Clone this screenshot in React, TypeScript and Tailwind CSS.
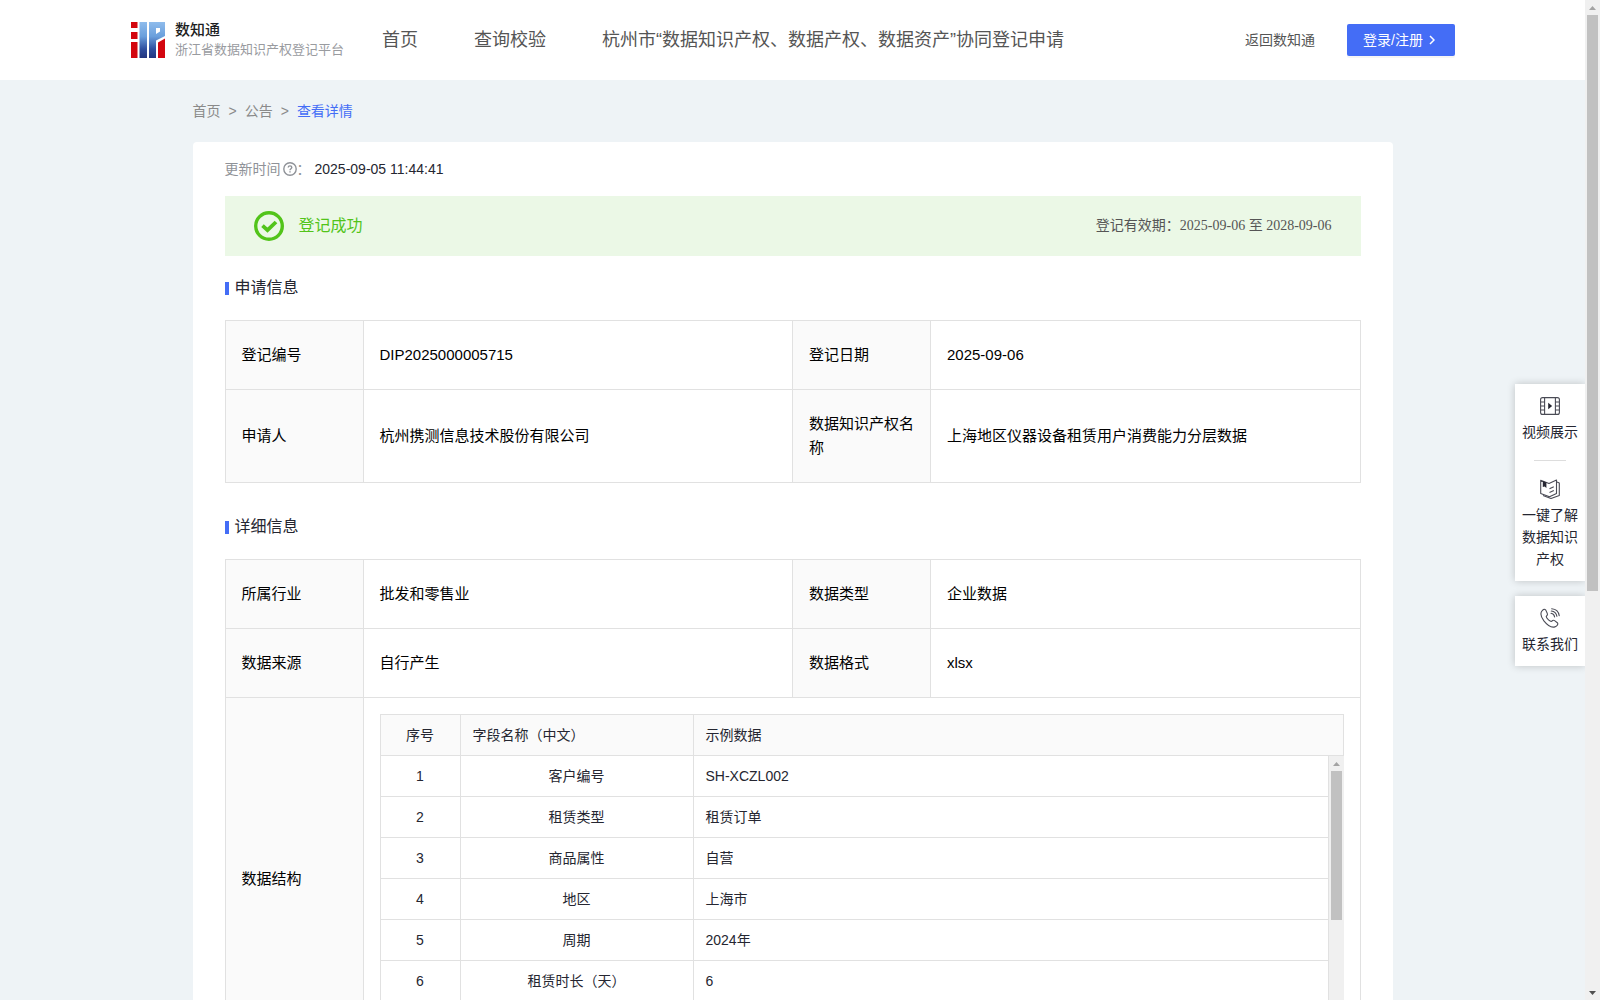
import React from "react";

const infoRows: [string, string, string, string][] = [
  ["登记编号", "DIP2025000005715", "登记日期", "2025-09-06"],
  ["申请人", "杭州携测信息技术股份有限公司", "数据知识产权名称", "上海地区仪器设备租赁用户消费能力分层数据"],
];

const detailRows: [string, string, string, string][] = [
  ["所属行业", "批发和零售业", "数据类型", "企业数据"],
  ["数据来源", "自行产生", "数据格式", "xlsx"],
];

const fields: [string, string][] = [
  ["客户编号", "SH-XCZL002"],
  ["租赁类型", "租赁订单"],
  ["商品属性", "自营"],
  ["地区", "上海市"],
  ["周期", "2024年"],
  ["租赁时长（天）", "6"],
];

function Logo() {
  return (
    <svg width="34" height="36" viewBox="0 0 34 36" aria-hidden="true">
      <defs>
        <linearGradient id="logoBlue" x1="0" y1="0" x2="0" y2="36" gradientUnits="userSpaceOnUse">
          <stop offset="0" stopColor="#8fbcec" />
          <stop offset="0.4" stopColor="#6a9fdc" />
          <stop offset="0.75" stopColor="#2f4f9f" />
          <stop offset="1" stopColor="#23367f" />
        </linearGradient>
      </defs>
      <g fill="#d3060f">
        <rect x="0" y="0" width="6.5" height="6" />
        <rect x="0" y="10" width="6.5" height="7" />
        <rect x="0" y="20" width="6.5" height="16" />
        <path d="M27 20.5 34 16.5V36H27Z" />
      </g>
      <g fill="url(#logoBlue)">
        <rect x="8.5" y="0" width="7.5" height="36" />
        <path fillRule="evenodd" d="M18 0H34V14L25 18.5V36H18ZM25 6V12L29 9.5V6Z" />
      </g>
    </svg>
  );
}

function HelpIcon() {
  return (
    <svg width="14" height="14" viewBox="0 0 14 14" fill="none" stroke="#8f9298" strokeWidth="1.4" aria-hidden="true">
      <circle cx="7" cy="7" r="6.2" />
      <path d="M5.2 5.6C5.2 4.5 6 3.9 7 3.9S8.8 4.5 8.8 5.5C8.8 6.6 7 6.8 7 8.2M7 9.3V10.5" />
    </svg>
  );
}

function SuccessIcon() {
  return (
    <svg width="30" height="30" viewBox="0 0 30 30" fill="none" stroke="#52c41a" aria-hidden="true">
      <circle cx="15" cy="15" r="13.3" strokeWidth="3.4" />
      <path d="M8.5 14.7 13.5 19.2 22 11" strokeWidth="3.8" />
    </svg>
  );
}

function VideoIcon() {
  return (
    <svg width="20" height="18" viewBox="0 0 20 18" fill="none" stroke="#4a4b55" strokeWidth="1.1" aria-hidden="true">
      <rect x="0.6" y="0.6" width="18.8" height="16.8" rx="2" />
      <path d="M4.6 1V17M15.4 1V17M1 5H4.6M1 9H4.6M1 13H4.6M15.4 5H19M15.4 9H19M15.4 13H19" />
      <path d="M8.2 5.8V12.2L12.2 9Z" fill="#252631" stroke="none" />
    </svg>
  );
}

function BookIcon() {
  return (
    <svg width="20" height="20" viewBox="0 0 20 20" fill="none" stroke="#4a4b55" strokeWidth="1.1" strokeLinejoin="round" aria-hidden="true">
      <path d="M0.7 1.2 9 4.5 16.5 1V14.5L9.5 17.8 0.7 14.5Z" />
      <path d="M17 3 19.3 4V16.5L11 19.5 3 16.5M9.5 9.8 13.8 7.8M9.5 13.6 13.8 11.6" />
      <path d="M2.8 2 6.4 3.5V9L4.6 7.4 2.8 8Z" fill="#252631" stroke="none" />
    </svg>
  );
}

function PhoneIcon() {
  return (
    <svg width="20" height="20" viewBox="0 0 20 20" fill="none" stroke="#4a4b55" strokeWidth="1.1" strokeLinecap="round" strokeLinejoin="round" aria-hidden="true">
      <path d="M5.8 2.1C4.7.9 3.5 1.1 2.2 2.6 0 5 .6 8.4 3.9 12.9 7.5 17.5 11.7 19.8 14.9 18.9 17.3 18.2 18.5 15.9 17.3 14.7L14.6 12.6C13.4 11.8 12.7 12.1 11.7 13.3 10.3 14 6.4 10.2 6.2 8.5 7.4 7.4 7.9 6.7 7.3 5.5Z" />
      <path d="M11 5.3C13 5.6 14.300 6.800 14.600 9M11.300 3C14.300 3.400 16.400 5.400 16.900 8.300M11.700.8C15.600 1.100 18.600 3.900 19.200 7.600" />
    </svg>
  );
}

function ArrowUp() {
  return (
    <svg width="7" height="4" viewBox="0 0 7 4" aria-hidden="true">
      <path d="M3.5 0 7 4H0Z" fill="#a3a3a3" />
    </svg>
  );
}

function ArrowDown() {
  return (
    <svg width="7" height="4" viewBox="0 0 7 4" aria-hidden="true">
      <path d="M0 0H7L3.5 4Z" fill="#505050" />
    </svg>
  );
}

function SectionTitle({ children }: { children: React.ReactNode }) {
  return (
    <h2 className="flex items-center gap-1.5 text-base leading-6 text-[#252631]">
      <span className="mt-px h-[13px] w-1 bg-[#446df6]" />
      {children}
    </h2>
  );
}

const labelCell = "border border-[#e1e1e1] bg-[#fafafa] py-[22px] pr-3 pl-4 text-left font-normal";
const valueCell = "border border-[#e1e1e1] px-4 py-[22px]";

function InfoTable({ rows, children }: { rows: [string, string, string, string][]; children?: React.ReactNode }) {
  return (
    <table className="mt-5 w-full table-fixed border-collapse text-[15px] leading-6 text-black">
      <colgroup>
        <col className="w-[138px]" />
        <col />
        <col className="w-[138px]" />
        <col />
      </colgroup>
      <tbody>
        {rows.map((r) => (
          <tr key={r[0]}>
            <th scope="row" className={labelCell}>{r[0]}</th>
            <td className={valueCell}>{r[1]}</td>
            <th scope="row" className={labelCell}>{r[2]}</th>
            <td className={valueCell}>{r[3]}</td>
          </tr>
        ))}
        {children}
      </tbody>
    </table>
  );
}

function FieldCols() {
  return (
    <colgroup>
      <col className="w-20" />
      <col className="w-[233px]" />
      <col />
    </colgroup>
  );
}

function FieldTable() {
  return (
    <div className="text-sm leading-5 text-[#252631]">
      <table className="w-full table-fixed border-collapse">
        <FieldCols />
        <thead>
          <tr className="h-[41px] bg-[#fafafa]">
            <th className="border border-[#e1e1e1] font-normal">序号</th>
            <th className="border border-[#e1e1e1] px-3 text-left font-normal">字段名称（中文）</th>
            <th className="border border-[#e1e1e1] px-3 text-left font-normal">示例数据</th>
          </tr>
        </thead>
      </table>
      <div className="flex h-[288px] overflow-hidden">
        <div className="min-w-0 flex-1">
          <table className="w-full table-fixed border-collapse">
            <FieldCols />
            <tbody>
              {fields.map(([name, sample], i) => (
                <tr key={name} className="h-[41px] first:h-10">
                  <td className="border border-t-0 border-[#e1e1e1] text-center">{i + 1}</td>
                  <td className="border border-t-0 border-[#e1e1e1] px-3 text-center">{name}</td>
                  <td className="border border-t-0 border-[#e1e1e1] px-3">{sample}</td>
                </tr>
              ))}
            </tbody>
          </table>
        </div>
        <div className="flex w-[15px] shrink-0 flex-col items-center bg-[#f0f0f0]">
          <div className="flex h-[15px] items-center"><ArrowUp /></div>
          <div className="h-[149px] w-[11px] bg-[#c1c1c1]" />
        </div>
      </div>
    </div>
  );
}

export default function App() {
  return (
    <div className="flex h-screen overflow-hidden bg-[#eef3f6] font-['Liberation_Sans','Noto_Sans_CJK_SC',sans-serif]">
      <div className="relative min-w-0 flex-1 overflow-hidden">
        <header className="flex h-20 items-center bg-white pr-[130px] pl-[131px]">
          <a href="#home" className="flex items-center gap-2.5">
            <Logo />
            <span className="flex flex-col whitespace-nowrap">
              <span className="text-[15px] leading-5 font-medium text-[#1d1e22]">数知通</span>
              <span className="text-[13px] leading-5 text-[#999b9f]">浙江省数据知识产权登记平台</span>
            </span>
          </a>
          <nav className="ml-[38px] flex gap-14 text-lg leading-6 whitespace-nowrap text-[#555555]">
            <a href="#index">首页</a>
            <a href="#verify">查询校验</a>
            <a href="#apply">杭州市“数据知识产权、数据产权、数据资产”协同登记申请</a>
          </nav>
          <a href="#back" className="ml-auto text-sm whitespace-nowrap text-[#555555]">返回数知通</a>
          <button type="button" className="ml-8 flex h-8 w-[108px] items-center gap-1.5 rounded-xs bg-[#446df6] pl-4 text-sm whitespace-nowrap text-white shadow-[0_2px_0_rgba(0,0,0,0.04)]">
            登录/注册
            <svg width="6" height="10" viewBox="0 0 6 10" fill="none" stroke="white" strokeWidth="1.5" aria-hidden="true">
              <path d="M1 1 5 5 1 9" />
            </svg>
          </button>
        </header>

        <main className="mx-auto max-w-[1200px]">
          <nav aria-label="面包屑" className="flex gap-2 py-5 text-sm leading-[22px] text-[#8a8a8a]">
            <a href="#index">首页</a>
            <span>&gt;</span>
            <a href="#notice">公告</a>
            <span>&gt;</span>
            <a href="#detail" className="text-[#446df6]">查看详情</a>
          </nav>

          <div className="rounded bg-white px-8 pt-4 pb-8">
            <div className="flex items-center text-sm leading-[22px] text-[#8f9298]">
              <span className="mr-0.5">更新时间</span>
              <HelpIcon />
              <span>：</span>
              <time className="ml-1 text-[#252631]">2025-09-05 11:44:41</time>
            </div>

            <div className="mt-4 flex h-[60px] items-center justify-between bg-[#ebf8e6] px-[29px]">
              <div className="flex items-center gap-[15px] text-base text-[#52c41a]">
                <SuccessIcon />
                登记成功
              </div>
              <p className="font-['Liberation_Serif','Noto_Sans_CJK_SC',serif] text-sm text-[#555555]">登记有效期：2025-09-06 至 2028-09-06</p>
            </div>

            <section className="mt-5">
              <SectionTitle>申请信息</SectionTitle>
              <InfoTable rows={infoRows} />
            </section>

            <section className="mt-8">
              <SectionTitle>详细信息</SectionTitle>
              <InfoTable rows={detailRows}>
                <tr>
                  <th scope="row" className={labelCell}>数据结构</th>
                  <td colSpan={3} className="border border-[#e1e1e1] p-4">
                    <FieldTable />
                  </td>
                </tr>
              </InfoTable>
            </section>
          </div>
        </main>

        <aside className="absolute top-96 right-0 flex w-[70px] flex-col gap-[15px] text-center text-sm leading-[22px] text-[#252631]">
          <div className="flex flex-col items-center bg-white px-[7px] pt-[13px] pb-[11px] shadow-[0_0_8px_rgba(0,0,0,0.2)]">
            <button type="button" className="flex flex-col items-center gap-1.5">
              <VideoIcon />
              <span>视频展示</span>
            </button>
            <div className="mt-[17px] mb-[18px] h-px w-8 bg-[#dddddd]" />
            <button type="button" className="flex flex-col items-center gap-[5px]">
              <BookIcon />
              <span>一键了解数据知识产权</span>
            </button>
          </div>
          <button type="button" className="flex flex-col items-center gap-[5px] bg-white pt-3 pb-[11px] shadow-[0_0_8px_rgba(0,0,0,0.2)]">
            <PhoneIcon />
            <span>联系我们</span>
          </button>
        </aside>
      </div>

      <div className="flex w-[15px] shrink-0 flex-col items-center bg-[#f0f0f0]">
        <div className="flex h-[15px] items-center"><ArrowUp /></div>
        <div className="h-[576px] w-[11px] bg-[#c1c1c1]" />
        <div className="mt-auto flex h-[15px] items-center"><ArrowDown /></div>
      </div>
    </div>
  );
}
